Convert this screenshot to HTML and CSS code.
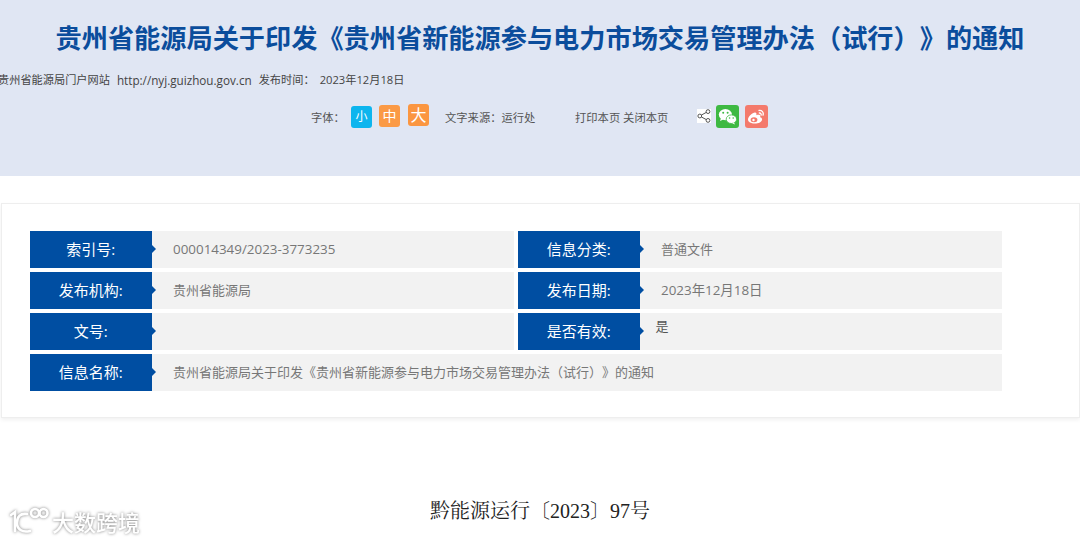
FILE: index.html
```html
<!DOCTYPE html>
<html lang="zh-CN">
<head>
<meta charset="utf-8">
<title>贵州省能源局关于印发《贵州省新能源参与电力市场交易管理办法（试行）》的通知</title>
<link rel="stylesheet" href="styles.css">
</head>
<body>
<header class="hero">
  <h1 class="title">贵州省能源局关于印发《贵州省新能源参与电力市场交易管理办法（试行）》的通知</h1>
  <div class="meta">
    <span>贵州省能源局门户网站</span>
    <span class="meta-url">http://nyj.guizhou.gov.cn</span>
    <span>发布时间：</span>
    <span class="meta-date">2023年12月18日</span>
  </div>
  <div class="tools">
    <span class="tool-label">字体：</span>
    <span class="size size-s">小</span>
    <span class="size size-m">中</span>
    <span class="size size-l">大</span>
    <span class="source">文字来源：运行处</span>
    <span class="print">打印本页 关闭本页</span>
    <span class="share">
      <svg viewBox="0 0 14 14" width="14" height="14"><circle cx="11" cy="2.6" r="1.9" fill="none" stroke="#555" stroke-width="1"/><circle cx="11" cy="11.4" r="1.9" fill="none" stroke="#555" stroke-width="1"/><circle cx="2.8" cy="7" r="1.9" fill="none" stroke="#555" stroke-width="1"/><path d="M4.5 6 9.3 3.4M4.5 8l4.8 2.6" fill="none" stroke="#555" stroke-width="1"/></svg>
    </span>
    <span class="social wechat">
      <svg viewBox="0 0 23 23" width="23" height="23"><ellipse cx="9.4" cy="9.6" rx="6.6" ry="5.6" fill="#fff"/><path d="M5 13l-1 3 3.4-1.6z" fill="#fff"/><ellipse cx="15.4" cy="14.2" rx="5.2" ry="4.3" fill="#fff" stroke="#3eb942" stroke-width=".8"/><path d="M18 17.5l1 2-2.8-1.2z" fill="#fff"/><circle cx="7.2" cy="7.8" r="1" fill="#3eb942"/><circle cx="11.6" cy="7.8" r="1" fill="#3eb942"/><circle cx="13.6" cy="13" r=".8" fill="#3eb942"/><circle cx="17.2" cy="13" r=".8" fill="#3eb942"/></svg>
    </span>
    <span class="social weibo">
      <svg viewBox="0 0 23 23" width="23" height="23"><path d="M9.6 18.600c-3.600 0-6.600-1.600-6.600-4 0-2.800 4.400-7 7-7 1.600 0 1.700 1.300 1.300 2.600 1.800-.7 4-.6 4 1 0 .4 0 .7-.2 1 1.400.4 2 1.200 2 2.200 0 2.200-3.400 4.200-7.500 4.200z" fill="#fff"/><ellipse cx="9" cy="14.800" rx="3.400" ry="2.500" fill="#f47a6c"/><circle cx="8.500" cy="15" r="1.200" fill="#fff"/><path d="M14 5.500c2.800-.5 5 1.900 4 4.700M14.300 8c1.300-.2 2.200 1 1.800 2.200" fill="none" stroke="#fff" stroke-width="1.300" stroke-linecap="round"/></svg>
    </span>
  </div>
</header>

<section class="card">
  <div class="info-grid">
    <div class="info-row"><div class="info-label">索引号:</div><div class="info-value info-num">000014349/2023-3773235</div></div>
    <div class="info-row"><div class="info-label">信息分类:</div><div class="info-value">普通文件</div></div>
    <div class="info-row"><div class="info-label">发布机构:</div><div class="info-value">贵州省能源局</div></div>
    <div class="info-row"><div class="info-label">发布日期:</div><div class="info-value info-num">2023年12月18日</div></div>
    <div class="info-row"><div class="info-label">文号:</div><div class="info-value"></div></div>
    <div class="info-row"><div class="info-label">是否有效:</div><div class="info-value info-raised">是</div></div>
    <div class="info-row info-wide"><div class="info-label">信息名称:</div><div class="info-value">贵州省能源局关于印发《贵州省新能源参与电力市场交易管理办法（试行）》的通知</div></div>
  </div>
</section>

<p class="doc-no">黔能源运行〔2023〕97号</p>

<div class="watermark">
  <svg class="wm-logo" viewBox="0 0 42 28" width="42" height="28"><g fill="none" stroke="#fff" stroke-width="2.600" stroke-linecap="round"><path d="M3 8l4-3v19"/><path d="M19 7c-7-1-10 3-10 9s5 10 13 8"/><circle cx="27" cy="6" r="4"/><circle cx="35.500" cy="6" r="4"/></g></svg>
  <span class="wm-text">大数跨境</span>
</div>
</body>
</html>
```
FILE: styles.css
```css
html, body {
  margin: 0;
  padding: 0;
  height: 541px;
  overflow: hidden;
  background: #fff;
}

body {
  position: relative;
  font-family: "Open Sans", "Noto Sans CJK SC", sans-serif;
  color: #555;
  text-spacing-trim: space-all;
}

.hero {
  height: 176px;
  box-sizing: border-box;
  padding-top: 17px;
  background: #e0e6f3;
}

.title {
  margin: 0;
  font-family: "Noto Sans CJK SC", sans-serif;
  font-size: 26.200px;
  line-height: 40px;
  font-weight: 700;
  color: #0b4d9c;
  text-align: center;
  white-space: nowrap;
}

.meta {
  display: flex;
  gap: 7px;
  margin: 13px 0 0 -2px;
  font-size: 11.200px;
  line-height: 20px;
  color: #444;
  white-space: nowrap;
}

.meta-url { font-size: 11.700px; }
.meta-date { margin-left: -2px; }

.tools {
  display: flex;
  align-items: flex-start;
  margin: 15px 0 0 311px;
  font-size: 11.300px;
  line-height: 24px;
  color: #555;
  white-space: nowrap;
}

.tool-label {
  width: 40px;
  margin-top: 1px;
}

.size {
  width: 21px;
  height: 22px;
  border-radius: 3px;
  color: #fff;
  text-align: center;
  line-height: 22px;
  margin-right: 7px;
}

.size-s { background: #0db5ee; margin-top: 1px; font-size: 12px; }
.size-m { background: #fb9a45; font-size: 14px; margin-right: 8px; }
.size-l { background: #fb9640; margin-top: -1px; font-size: 16px; }

.source { margin: 1px 0 0 9px; width: 130px; }
.print { width: 122px; margin-top: 1px; }

.share {
  display: flex;
  width: 14px;
  height: 14px;
  margin: 4px 5px 0 0;
  background: #fff;
}

.social {
  display: flex;
  width: 23px;
  height: 23px;
  border-radius: 3px;
  margin-right: 6px;
}

.wechat { background: #3eb942; }
.weibo { background: #f47a6c; }

.card {
  box-sizing: border-box;
  height: 215px;
  margin: 27px 0 0 1px;
  padding: 26.500px 0 0 28px;
  background: #fff;
  border: 1px solid #eee;
  box-shadow: 0 2px 4px rgba(0, 0, 0, .06);
}

.info-grid {
  display: grid;
  grid-template-columns: 484px 484px;
  grid-auto-rows: 37.500px;
  gap: 3.500px 4px;
}

.info-row {
  display: flex;
  background: #f2f2f2;
}

.info-wide { grid-column: 1 / -1; }

.info-label {
  position: relative;
  flex: none;
  width: 121.500px;
  background: #004ea2;
  color: #fff;
  font-size: 15px;
  line-height: 37px;
  text-align: center;
}

.info-label::after {
  content: "";
  position: absolute;
  top: 14px;
  right: -4px;
  width: 0;
  height: 0;
  border-top: 4px solid transparent;
  border-bottom: 4px solid transparent;
  border-left: 4px solid #004ea2;
}

.info-value {
  padding-left: 21.500px;
  font-size: 13px;
  line-height: 36px;
  color: #777;
}

.info-num { font-size: 13.400px; }

.info-raised {
  padding-left: 16px;
  line-height: 27px;
  color: #555;
}

.doc-no {
  margin: 79px 0 0;
  padding-left: 430px;
  font-family: "Liberation Serif", "Noto Serif CJK SC", "Noto Sans CJK SC", serif;
  font-size: 20px;
  line-height: 28px;
  color: #222;
}

.watermark {
  position: absolute;
  left: 8px;
  bottom: 6px;
  display: flex;
  align-items: center;
  gap: 2px;
  filter: drop-shadow(0 0 1.500px rgba(0, 0, 0, .5));
}

.wm-text {
  font-family: "Noto Sans CJK SC", sans-serif;
  font-size: 22px;
  font-weight: 500;
  line-height: 28px;
  color: #fff;
}
```
